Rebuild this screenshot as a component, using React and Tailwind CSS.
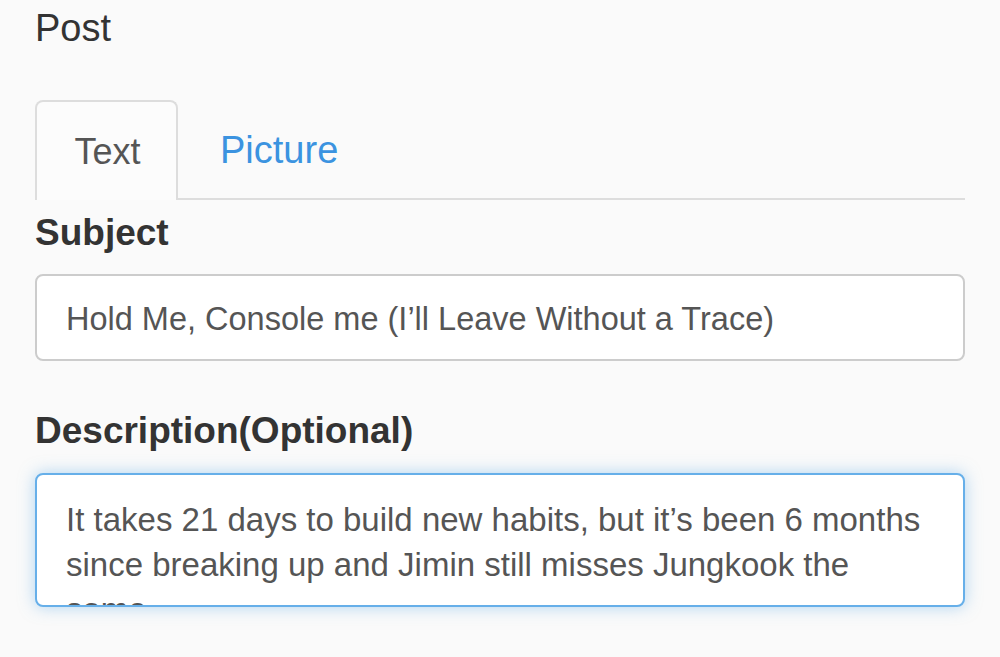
export default function App() {
  return (
    <div
      className="min-h-[657px] w-[1000px] overflow-hidden bg-[#fafafa] px-[35px] text-[#333]"
      style={{ fontFamily: '"Liberation Sans", Arial, sans-serif' }}
    >
      <h1 className="pt-[5px] text-[38px] leading-[46px] font-normal text-[#333]">Post</h1>

      <div className="mt-[49px] flex border-b-2 border-[#ddd]">
        <div className="-mb-[2px] flex h-[100px] w-[143px] items-center justify-center rounded-t-[8px] border-2 border-b-0 border-[#ddd] bg-[#fcfcfc] pl-[2px] pt-[2px] text-[36px] text-[#555]">
          Text
        </div>
        <div className="flex h-[98px] items-center pl-[42px] pt-[2px] text-[38px] text-[#3b93e0]">Picture</div>
      </div>

      <div className="mt-[11px] text-[37px] leading-[44px] font-bold text-[#333]">Subject</div>

      <div className="mt-[19px] flex h-[87px] w-[930px] items-center rounded-[8px] border-2 border-[#ccc] bg-white pl-[29px] pt-[3px] text-[32.5px] text-[#555]">
        Hold Me, Console me (I’ll Leave Without a Trace)
      </div>

      <div className="mt-[48px] text-[37px] leading-[44px] font-bold text-[#333]">Description(Optional)</div>

      <div className="mt-[20px] h-[134px] w-[930px] overflow-hidden rounded-[8px] border-2 border-[#66afe9] bg-white pl-[29px] pr-[30px] pt-[22px] text-[33px] leading-[45px] text-[#555] shadow-[0_0_16px_rgba(102,175,233,0.5)]">
        It takes 21 days to build new habits, but it’s been 6 months since breaking up and Jimin still misses Jungkook the same
      </div>
    </div>
  )
}
